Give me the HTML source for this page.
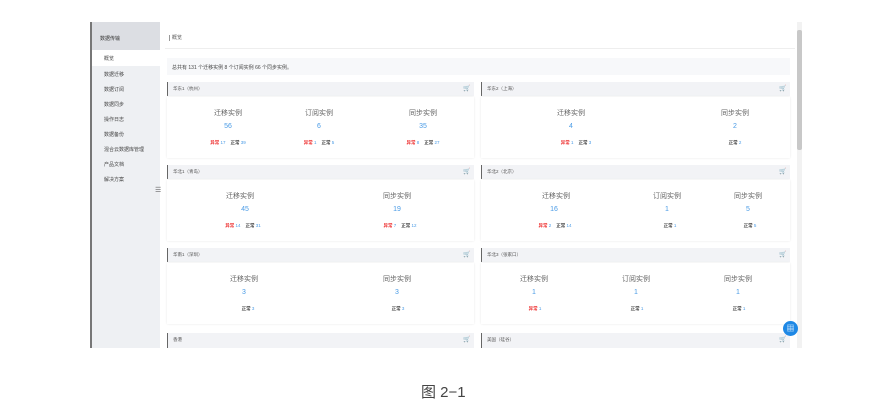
<!DOCTYPE html>
<html><head><meta charset="utf-8">
<style>
*{margin:0;padding:0;box-sizing:border-box}
body{width:885px;height:407px;background:#fff;position:relative;overflow:hidden;font-family:"Liberation Sans","Noto Sans CJK SC",sans-serif;color:#333}
.a{position:absolute}
.sb{left:90px;top:22px;width:70px;height:326px;background:#eef0f3;border-left:2px solid #777}
.sbh{left:92px;top:22px;width:68px;height:28px;background:#dcdee3;font-size:5px;padding:13px 0 0 8px;color:#333}
.mi{left:92px;width:68px;height:16px;font-size:5px;padding:5px 0 0 12px;color:#444}
.hdr{position:absolute;background:#f2f3f6;height:14px;border-left:1px solid #666;font-size:4.5px;color:#555;padding:4px 0 0 5px}
.body{position:absolute;background:#fff;height:61px;box-shadow:0 0 2px #e6e6e6}
.cart{position:absolute;right:5px;top:3px;width:6px;height:7px;font-size:6px;color:#777}
.t{position:absolute;font-size:7px;color:#666;transform:translateX(-50%);white-space:nowrap}
.n{position:absolute;font-size:7px;color:#4a9be6;transform:translateX(-50%)}
.s{position:absolute;font-size:4.5px;color:#444;transform:translateX(-50%);white-space:nowrap;font-weight:bold}
.s .e{color:#e33}.s .v{color:#4a9be6;font-weight:normal}
</style></head><body>
<div class="a sb"></div>
<div class="a sbh">数据传输</div>
<div class="a mi" style="top:50px;background:#fff">概览</div>
<div class="a mi" style="top:66px">数据迁移</div>
<div class="a mi" style="top:81px">数据订阅</div>
<div class="a mi" style="top:96px">数据同步</div>
<div class="a mi" style="top:111px">操作日志</div>
<div class="a mi" style="top:126px">数据备份</div>
<div class="a mi" style="top:141px">混合云数据库管理</div>
<div class="a mi" style="top:156px">产品文档</div>
<div class="a mi" style="top:171px">解决方案</div>
<div class="a" style="left:155px;top:186px;font-size:7px;color:#666">☰</div>
<div class="a" style="left:165px;top:22px;width:630px;height:27px;background:#fff;border-bottom:1px solid #eee;font-size:5px;padding:12px 0 0 4px;color:#555;border-left:0"><span style="border-left:1px solid #999;padding-left:2px">概览</span></div>
<div class="a" style="left:167px;top:58px;width:623px;height:17px;background:#f7f8fa;font-size:5px;color:#444;padding:6px 0 0 5px">总共有 131 个迁移实例 8 个订阅实例 66 个同步实例。</div>
<div class="a" style="left:797px;top:22px;width:5px;height:326px;background:#f2f2f2"></div>
<div class="a" style="left:797px;top:30px;width:5px;height:120px;background:#c8c8c8;border-radius:2px"></div>

<div class="hdr" style="left:167px;top:82px;width:307px">华东1（杭州）<span class="cart">🛒</span></div>
<div class="body" style="left:167px;top:97px;width:307px"></div>
<div class="hdr" style="left:481px;top:82px;width:309px">华东2（上海）<span class="cart">🛒</span></div>
<div class="body" style="left:481px;top:97px;width:309px"></div>
<div class="hdr" style="left:167px;top:165px;width:307px">华北1（青岛）<span class="cart">🛒</span></div>
<div class="body" style="left:167px;top:180px;width:307px"></div>
<div class="hdr" style="left:481px;top:165px;width:309px">华北2（北京）<span class="cart">🛒</span></div>
<div class="body" style="left:481px;top:180px;width:309px"></div>
<div class="hdr" style="left:167px;top:248px;width:307px">华南1（深圳）<span class="cart">🛒</span></div>
<div class="body" style="left:167px;top:263px;width:307px"></div>
<div class="hdr" style="left:481px;top:248px;width:309px">华北3（张家口）<span class="cart">🛒</span></div>
<div class="body" style="left:481px;top:263px;width:309px"></div>
<div class="hdr" style="left:167px;top:333px;width:307px;height:15px">香港<span class="cart">🛒</span></div>
<div class="hdr" style="left:481px;top:333px;width:309px;height:15px">美国（硅谷）<span class="cart">🛒</span></div>

<div class="t" style="left:228px;top:108px">迁移实例</div><div class="n" style="left:228px;top:123px">56</div><div class="s" style="left:228px;top:140px"><span class="e">异常</span> <span class="v">17</span> &nbsp;&nbsp; 正常 <span class="v">39</span></div>
<div class="t" style="left:319px;top:108px">订阅实例</div><div class="n" style="left:319px;top:123px">6</div><div class="s" style="left:319px;top:140px"><span class="e">异常</span> <span class="v">1</span> &nbsp;&nbsp; 正常 <span class="v">5</span></div>
<div class="t" style="left:423px;top:108px">同步实例</div><div class="n" style="left:423px;top:123px">35</div><div class="s" style="left:423px;top:140px"><span class="e">异常</span> <span class="v">8</span> &nbsp;&nbsp; 正常 <span class="v">27</span></div>
<div class="t" style="left:571px;top:108px">迁移实例</div><div class="n" style="left:571px;top:123px">4</div><div class="s" style="left:576px;top:140px"><span class="e">异常</span> <span class="v">1</span> &nbsp;&nbsp; 正常 <span class="v">3</span></div>
<div class="t" style="left:735px;top:108px">同步实例</div><div class="n" style="left:735px;top:123px">2</div><div class="s" style="left:735px;top:140px">正常 <span class="v">2</span></div>
<div class="t" style="left:240px;top:191px">迁移实例</div><div class="n" style="left:245px;top:206px">45</div><div class="s" style="left:243px;top:223px"><span class="e">异常</span> <span class="v">14</span> &nbsp;&nbsp; 正常 <span class="v">31</span></div>
<div class="t" style="left:397px;top:191px">同步实例</div><div class="n" style="left:397px;top:206px">19</div><div class="s" style="left:400px;top:223px"><span class="e">异常</span> <span class="v">7</span> &nbsp;&nbsp; 正常 <span class="v">12</span></div>
<div class="t" style="left:556px;top:191px">迁移实例</div><div class="n" style="left:554px;top:206px">16</div><div class="s" style="left:555px;top:223px"><span class="e">异常</span> <span class="v">2</span> &nbsp;&nbsp; 正常 <span class="v">14</span></div>
<div class="t" style="left:667px;top:191px">订阅实例</div><div class="n" style="left:667px;top:206px">1</div><div class="s" style="left:670px;top:223px">正常 <span class="v">1</span></div>
<div class="t" style="left:748px;top:191px">同步实例</div><div class="n" style="left:748px;top:206px">5</div><div class="s" style="left:750px;top:223px">正常 <span class="v">5</span></div>
<div class="t" style="left:244px;top:274px">迁移实例</div><div class="n" style="left:244px;top:289px">3</div><div class="s" style="left:248px;top:306px">正常 <span class="v">3</span></div>
<div class="t" style="left:397px;top:274px">同步实例</div><div class="n" style="left:397px;top:289px">3</div><div class="s" style="left:398px;top:306px">正常 <span class="v">3</span></div>
<div class="t" style="left:534px;top:274px">迁移实例</div><div class="n" style="left:534px;top:289px">1</div><div class="s" style="left:535px;top:306px"><span class="e">异常</span> <span class="v">1</span></div>
<div class="t" style="left:636px;top:274px">订阅实例</div><div class="n" style="left:636px;top:289px">1</div><div class="s" style="left:637px;top:306px">正常 <span class="v">1</span></div>
<div class="t" style="left:738px;top:274px">同步实例</div><div class="n" style="left:738px;top:289px">1</div><div class="s" style="left:739px;top:306px">正常 <span class="v">1</span></div>

<div class="a" style="left:783px;top:321px;width:15px;height:15px;border-radius:50%;background:#1e88e5;color:#fff;font-size:8px;text-align:center;line-height:15px">▦</div>
<div class="a" style="left:421px;top:381px;font-size:15px;color:#444">图 2−1</div>
</body></html>
